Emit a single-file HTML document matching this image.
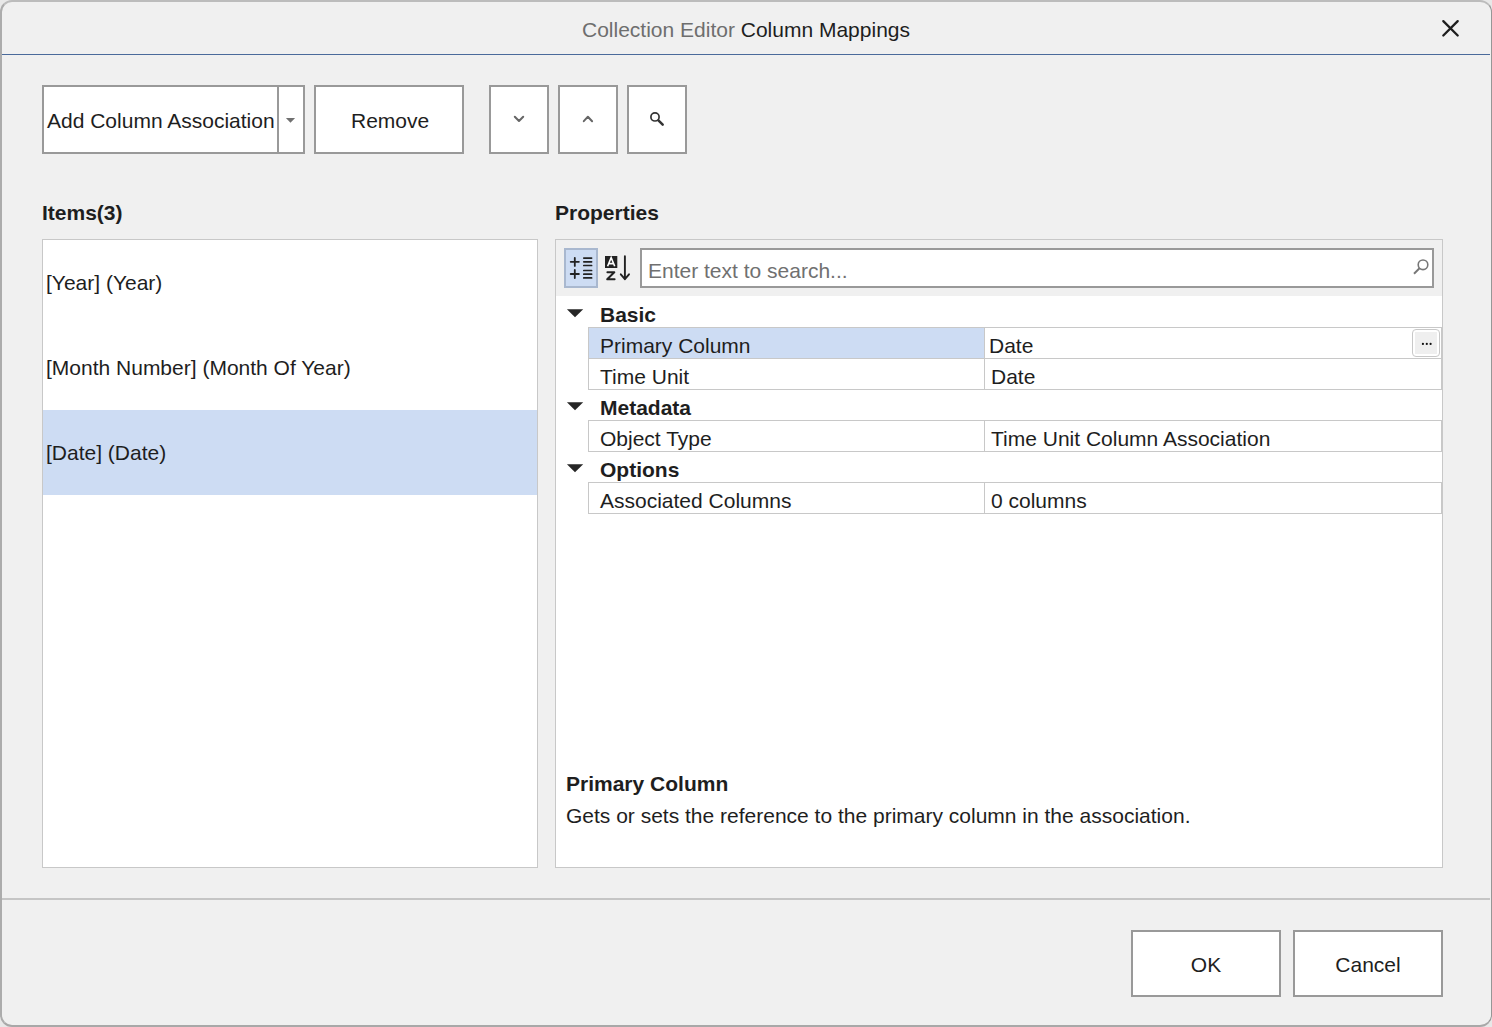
<!DOCTYPE html>
<html>
<head>
<meta charset="utf-8">
<style>
html,body{margin:0;padding:0;}
body{width:1492px;height:1027px;position:relative;overflow:hidden;background:#e8e8e8;font-family:"Liberation Sans",sans-serif;color:#1e1e1e;}
.a{position:absolute;}
.t{position:absolute;white-space:nowrap;font-size:21px;line-height:21px;}
.b{font-weight:700;}
.dlg{position:absolute;left:0;top:0;width:1489px;height:1023px;border-style:solid;border-width:2px 1px 2px 2px;border-color:#bcbcbc #969696 #a8a8a8 #acacac;border-radius:12px;background:#f0f0f0;}
.btn{position:absolute;box-sizing:border-box;border:2px solid #999999;background:#ffffff;}
.box{position:absolute;box-sizing:border-box;border:1px solid #c8c8c8;background:#ffffff;}
.row{position:absolute;box-sizing:border-box;}
</style>
</head>
<body>
<div class="dlg"></div>

<!-- title -->
<div class="t" style="left:582px;top:19px;"><span style="color:#6e6e6e">Collection Editor</span> <span style="color:#1e1e1e">Column Mappings</span></div>
<svg class="a" style="left:1436px;top:14px" width="30" height="30" viewBox="0 0 30 30"><path d="M7.3 7.1 L21.7 21.5 M21.7 7.1 L7.3 21.5" stroke="#1e1e1e" stroke-width="2.3" stroke-linecap="round"/></svg>
<div class="a" style="left:2px;top:54px;width:1488px;height:1px;background:#4a6a9b"></div>

<!-- toolbar buttons -->
<div class="btn" style="left:42px;top:85px;width:263px;height:69px;"></div>
<div class="a" style="left:277px;top:85px;width:2px;height:69px;background:#999"></div>
<div class="t" style="left:47px;top:110px;">Add Column Association</div>
<svg class="a" style="left:284px;top:116px" width="14" height="9" viewBox="0 0 14 9"><path d="M1.9 2 L11.1 2 L6.5 6.7 Z" fill="#707070"/></svg>

<div class="btn" style="left:314px;top:85px;width:150px;height:69px;"></div>
<div class="t" style="left:351px;top:110px;">Remove</div>

<div class="btn" style="left:489px;top:85px;width:60px;height:69px;"></div>
<svg class="a" style="left:489px;top:85px" width="60" height="69"><path d="M25.8 31.7 L30 36 L34.2 31.7" stroke="#666" stroke-width="2" fill="none" stroke-linecap="round" stroke-linejoin="round"/></svg>
<div class="btn" style="left:558px;top:85px;width:60px;height:69px;"></div>
<svg class="a" style="left:558px;top:85px" width="60" height="69"><path d="M25.8 36.2 L29.9 31.7 L34.1 36.2" stroke="#666" stroke-width="2" fill="none" stroke-linecap="round" stroke-linejoin="round"/></svg>
<div class="btn" style="left:627px;top:85px;width:60px;height:69px;"></div>
<svg class="a" style="left:627px;top:85px" width="60" height="69"><circle cx="28" cy="31.9" r="4.1" stroke="#333" stroke-width="1.7" fill="none"/><path d="M31.4 35.4 L35.7 39.7" stroke="#333" stroke-width="2.5" stroke-linecap="round"/></svg>

<!-- labels -->
<div class="t b" style="left:42px;top:202px;">Items(3)</div>
<div class="t b" style="left:555px;top:202px;">Properties</div>

<!-- items list -->
<div class="box" style="left:42px;top:239px;width:496px;height:629px;"></div>
<div class="a" style="left:43px;top:410px;width:494px;height:85px;background:#cddcf3"></div>
<div class="t" style="left:46px;top:272px;">[Year] (Year)</div>
<div class="t" style="left:46px;top:357px;">[Month Number] (Month Of Year)</div>
<div class="t" style="left:46px;top:442px;">[Date] (Date)</div>

<!-- properties -->
<div class="box" style="left:555px;top:239px;width:888px;height:629px;"></div>
<div class="a" style="left:556px;top:240px;width:886px;height:56px;background:#f0f0f0"></div>
<!-- categorized button -->
<div class="a" style="left:564px;top:248px;width:30px;height:36px;border:2px solid #a9b8cf;background:#cddcf3"></div>
<svg class="a" style="left:564px;top:248px" width="34" height="40" viewBox="0 0 34 40">
 <path d="M6.7 13.8 H14.9 M10.8 9.8 V17.9 M6.7 26 H14.9 M10.8 22 V30.1" stroke="#222" stroke-width="1.8" stroke-linecap="round"/>
 <path d="M19.8 10.1 H27.6 M19.8 13.8 H27.6 M19.8 17.5 H27.6 M19.8 22.5 H27.6 M19.8 26.2 H27.6 M19.8 29.9 H27.6" stroke="#222" stroke-width="1.7" stroke-linecap="round"/>
</svg>
<!-- alphabetical icon -->
<svg class="a" style="left:600px;top:248px" width="36" height="40" viewBox="0 0 36 40">
 <rect x="5" y="8" width="12.3" height="12" fill="#222"/>
 <path d="M7.6 18.3 L11.15 9.6 L14.7 18.3 M8.7 15.6 H13.6" stroke="#fff" stroke-width="1.6" fill="none"/>
 <path d="M7.4 24.3 H14.3 L7.2 31.3 H14.6" stroke="#222" stroke-width="2" fill="none" stroke-linejoin="round" stroke-linecap="round"/>
 <path d="M24.9 8.3 V31.2 M20.8 26.3 L24.9 31.2 L29 26.3" stroke="#222" stroke-width="1.9" fill="none" stroke-linecap="round" stroke-linejoin="round"/>
</svg>
<!-- search box -->
<div class="btn" style="left:640px;top:248px;width:794px;height:40px;"></div>
<div class="t" style="left:648px;top:260px;color:#707070">Enter text to search...</div>
<svg class="a" style="left:1400px;top:250px" width="32" height="36" viewBox="0 0 32 36"><circle cx="23" cy="14.8" r="4.8" stroke="#777" stroke-width="1.6" fill="none"/><path d="M19.5 18.3 L14 23.8" stroke="#777" stroke-width="2"/></svg>

<!-- grid -->
<svg class="a" style="left:560px;top:300px" width="30" height="220" viewBox="0 0 30 220">
 <path d="M6.9 9.2 H23.2 L15 17.2 Z" fill="#262626"/>
 <path d="M6.9 102.2 H23.2 L15 110.2 Z" fill="#262626"/>
 <path d="M6.9 164.2 H23.2 L15 172.2 Z" fill="#262626"/>
</svg>
<div class="t b" style="left:600px;top:304px;">Basic</div>
<div class="a" style="left:588px;top:327px;width:854px;height:63px;box-sizing:border-box;border:1px solid #c8c8c8;"></div>
<div class="a" style="left:589px;top:328px;width:395px;height:30px;background:#cddcf3"></div>
<div class="a" style="left:589px;top:358px;width:852px;height:1px;background:#c8c8c8"></div>
<div class="a" style="left:984px;top:328px;width:1px;height:61px;background:#c8c8c8"></div>
<div class="t" style="left:600px;top:335px;">Primary Column</div>
<div class="t" style="left:989px;top:335px;">Date</div>
<div class="a" style="left:1412px;top:329px;width:28px;height:28px;box-sizing:border-box;border:1px solid #c8c8c8;border-radius:4px;background:#fff;"></div>
<div class="a" style="left:1415px;top:332px;width:22px;height:22px;background:#efefef;"></div>
<svg class="a" style="left:1412px;top:329px" width="28" height="28"><circle cx="10.9" cy="14.9" r="1.1" fill="#111"/><circle cx="14.8" cy="14.9" r="1.1" fill="#111"/><circle cx="18.6" cy="14.9" r="1.1" fill="#111"/></svg>
<div class="t" style="left:600px;top:366px;">Time Unit</div>
<div class="t" style="left:991px;top:366px;">Date</div>

<div class="t b" style="left:600px;top:397px;">Metadata</div>
<div class="a" style="left:588px;top:420px;width:854px;height:32px;box-sizing:border-box;border:1px solid #c8c8c8;"></div>
<div class="a" style="left:984px;top:421px;width:1px;height:30px;background:#c8c8c8"></div>
<div class="t" style="left:600px;top:428px;">Object Type</div>
<div class="t" style="left:991px;top:428px;">Time Unit Column Association</div>

<div class="t b" style="left:600px;top:459px;">Options</div>
<div class="a" style="left:588px;top:482px;width:854px;height:32px;box-sizing:border-box;border:1px solid #c8c8c8;"></div>
<div class="a" style="left:984px;top:483px;width:1px;height:30px;background:#c8c8c8"></div>
<div class="t" style="left:600px;top:490px;">Associated Columns</div>
<div class="t" style="left:991px;top:490px;">0 columns</div>

<!-- description -->
<div class="t b" style="left:566px;top:773px;">Primary Column</div>
<div class="t" style="left:566px;top:805px;">Gets or sets the reference to the primary column in the association.</div>

<!-- footer -->
<div class="a" style="left:2px;top:898px;width:1488px;height:2px;background:#c5c5c5"></div>
<div class="btn" style="left:1131px;top:930px;width:150px;height:67px;"></div>
<div class="t" style="left:1131px;width:150px;text-align:center;top:954px;">OK</div>
<div class="btn" style="left:1293px;top:930px;width:150px;height:67px;"></div>
<div class="t" style="left:1293px;width:150px;text-align:center;top:954px;">Cancel</div>

</body>
</html>
